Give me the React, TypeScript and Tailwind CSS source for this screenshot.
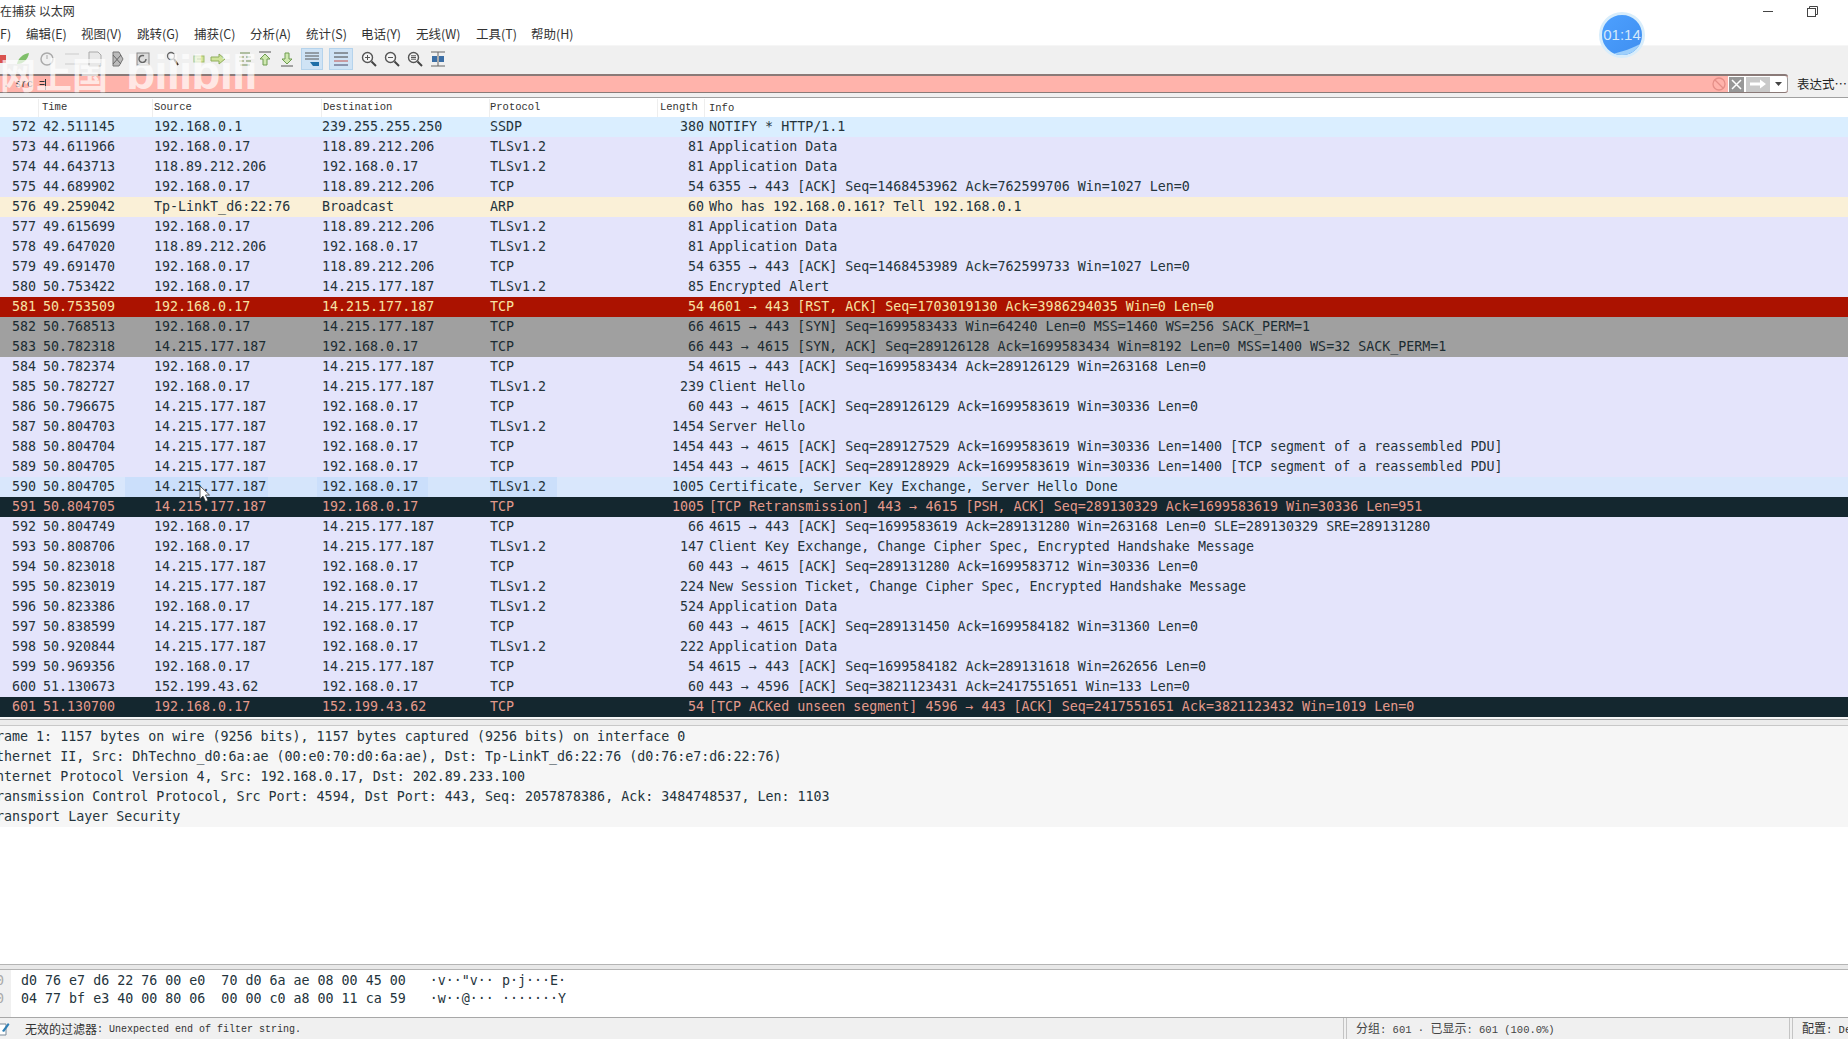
import React from "react";

const mono = "font-['DejaVu_Sans_Mono','Liberation_Mono',monospace]";
const cjk = "font-['Noto_Sans_CJK_SC','Liberation_Sans',sans-serif]";
const bitmap = "font-['Liberation_Mono','Noto_Sans_CJK_SC',monospace]";

type Kind = "udp" | "tcp" | "arp" | "rst" | "syn" | "bad" | "hl";
const styles: Record<Kind, string> = {
  udp: "bg-[#daeeff] text-[#24343c]",
  tcp: "bg-[#e4e4fb] text-[#24343c]",
  arp: "bg-[#faf0d7] text-[#24343c]",
  rst: "bg-[#ab1200] text-[#f8e2a4]",
  syn: "bg-[#a0a0a0] text-[#1c2c32]",
  bad: "bg-[#14272f] text-[#e39a8c]",
  hl: "bg-[linear-gradient(90deg,#d9e7fc_125px,#cbdffb_125px,#cbdffb_268px,#d5e5fb_268px,#d5e5fb_317px,#cbdffb_317px,#cbdffb_428px,#d5e5fb_428px,#d5e5fb_490px,#cbdffb_490px,#cbdffb_557px,#d9e7fc_557px)] text-[#24343c]",
};

const rows: [string, string, string, string, string, string, string, Kind][] = [
  ["572", "42.511145", "192.168.0.1", "239.255.255.250", "SSDP", "380", "NOTIFY * HTTP/1.1", "udp"],
  ["573", "44.611966", "192.168.0.17", "118.89.212.206", "TLSv1.2", "81", "Application Data", "tcp"],
  ["574", "44.643713", "118.89.212.206", "192.168.0.17", "TLSv1.2", "81", "Application Data", "tcp"],
  ["575", "44.689902", "192.168.0.17", "118.89.212.206", "TCP", "54", "6355 → 443 [ACK] Seq=1468453962 Ack=762599706 Win=1027 Len=0", "tcp"],
  ["576", "49.259042", "Tp-LinkT_d6:22:76", "Broadcast", "ARP", "60", "Who has 192.168.0.161? Tell 192.168.0.1", "arp"],
  ["577", "49.615699", "192.168.0.17", "118.89.212.206", "TLSv1.2", "81", "Application Data", "tcp"],
  ["578", "49.647020", "118.89.212.206", "192.168.0.17", "TLSv1.2", "81", "Application Data", "tcp"],
  ["579", "49.691470", "192.168.0.17", "118.89.212.206", "TCP", "54", "6355 → 443 [ACK] Seq=1468453989 Ack=762599733 Win=1027 Len=0", "tcp"],
  ["580", "50.753422", "192.168.0.17", "14.215.177.187", "TLSv1.2", "85", "Encrypted Alert", "tcp"],
  ["581", "50.753509", "192.168.0.17", "14.215.177.187", "TCP", "54", "4601 → 443 [RST, ACK] Seq=1703019130 Ack=3986294035 Win=0 Len=0", "rst"],
  ["582", "50.768513", "192.168.0.17", "14.215.177.187", "TCP", "66", "4615 → 443 [SYN] Seq=1699583433 Win=64240 Len=0 MSS=1460 WS=256 SACK_PERM=1", "syn"],
  ["583", "50.782318", "14.215.177.187", "192.168.0.17", "TCP", "66", "443 → 4615 [SYN, ACK] Seq=289126128 Ack=1699583434 Win=8192 Len=0 MSS=1400 WS=32 SACK_PERM=1", "syn"],
  ["584", "50.782374", "192.168.0.17", "14.215.177.187", "TCP", "54", "4615 → 443 [ACK] Seq=1699583434 Ack=289126129 Win=263168 Len=0", "tcp"],
  ["585", "50.782727", "192.168.0.17", "14.215.177.187", "TLSv1.2", "239", "Client Hello", "tcp"],
  ["586", "50.796675", "14.215.177.187", "192.168.0.17", "TCP", "60", "443 → 4615 [ACK] Seq=289126129 Ack=1699583619 Win=30336 Len=0", "tcp"],
  ["587", "50.804703", "14.215.177.187", "192.168.0.17", "TLSv1.2", "1454", "Server Hello", "tcp"],
  ["588", "50.804704", "14.215.177.187", "192.168.0.17", "TCP", "1454", "443 → 4615 [ACK] Seq=289127529 Ack=1699583619 Win=30336 Len=1400 [TCP segment of a reassembled PDU]", "tcp"],
  ["589", "50.804705", "14.215.177.187", "192.168.0.17", "TCP", "1454", "443 → 4615 [ACK] Seq=289128929 Ack=1699583619 Win=30336 Len=1400 [TCP segment of a reassembled PDU]", "tcp"],
  ["590", "50.804705", "14.215.177.187", "192.168.0.17", "TLSv1.2", "1005", "Certificate, Server Key Exchange, Server Hello Done", "hl"],
  ["591", "50.804705", "14.215.177.187", "192.168.0.17", "TCP", "1005", "[TCP Retransmission] 443 → 4615 [PSH, ACK] Seq=289130329 Ack=1699583619 Win=30336 Len=951", "bad"],
  ["592", "50.804749", "192.168.0.17", "14.215.177.187", "TCP", "66", "4615 → 443 [ACK] Seq=1699583619 Ack=289131280 Win=263168 Len=0 SLE=289130329 SRE=289131280", "tcp"],
  ["593", "50.808706", "192.168.0.17", "14.215.177.187", "TLSv1.2", "147", "Client Key Exchange, Change Cipher Spec, Encrypted Handshake Message", "tcp"],
  ["594", "50.823018", "14.215.177.187", "192.168.0.17", "TCP", "60", "443 → 4615 [ACK] Seq=289131280 Ack=1699583712 Win=30336 Len=0", "tcp"],
  ["595", "50.823019", "14.215.177.187", "192.168.0.17", "TLSv1.2", "224", "New Session Ticket, Change Cipher Spec, Encrypted Handshake Message", "tcp"],
  ["596", "50.823386", "192.168.0.17", "14.215.177.187", "TLSv1.2", "524", "Application Data", "tcp"],
  ["597", "50.838599", "14.215.177.187", "192.168.0.17", "TCP", "60", "443 → 4615 [ACK] Seq=289131450 Ack=1699584182 Win=31360 Len=0", "tcp"],
  ["598", "50.920844", "14.215.177.187", "192.168.0.17", "TLSv1.2", "222", "Application Data", "tcp"],
  ["599", "50.969356", "192.168.0.17", "14.215.177.187", "TCP", "54", "4615 → 443 [ACK] Seq=1699584182 Ack=289131618 Win=262656 Len=0", "tcp"],
  ["600", "51.130673", "152.199.43.62", "192.168.0.17", "TCP", "60", "443 → 4596 [ACK] Seq=3821123431 Ack=2417551651 Win=133 Len=0", "tcp"],
  ["601", "51.130700", "192.168.0.17", "152.199.43.62", "TCP", "54", "[TCP ACKed unseen segment] 4596 → 443 [ACK] Seq=2417551651 Ack=3821123432 Win=1019 Len=0", "bad"],
];

const menus: [string, string][] = [
  ["F)", "w-[26px]"], ["编辑(E)", "w-[55px]"], ["视图(V)", "w-[56px]"], ["跳转(G)", "w-[57px]"], ["捕获(C)", "w-[56px]"],
  ["分析(A)", "w-[56px]"], ["统计(S)", "w-[55px]"], ["电话(Y)", "w-[55px]"], ["无线(W)", "w-[60px]"], ["工具(T)", "w-[55px]"], ["帮助(H)", "w-[60px]"],
];

const details = [
  "Frame 1: 1157 bytes on wire (9256 bits), 1157 bytes captured (9256 bits) on interface 0",
  "Ethernet II, Src: DhTechno_d0:6a:ae (00:e0:70:d0:6a:ae), Dst: Tp-LinkT_d6:22:76 (d0:76:e7:d6:22:76)",
  "Internet Protocol Version 4, Src: 192.168.0.17, Dst: 202.89.233.100",
  "Transmission Control Protocol, Src Port: 4594, Dst Port: 443, Seq: 2057878386, Ack: 3484748537, Len: 1103",
  "Transport Layer Security",
];

const Ic = ({ ml, children }: { ml: string; children: React.ReactNode }) => (
  <svg width="18" height="18" viewBox="0 0 18 18" fill="none" className={`${ml} shrink-0`}>{children}</svg>
);
const Mag = ({ sign }: { sign: "+" | "-" | "=" }) => (
  <>
    <circle cx="7.5" cy="7.5" r="5" stroke="#555" strokeWidth="1.4" fill="#f6f6f6" />
    <path d="M11.5 11.5 L16 16" stroke="#444" strokeWidth="2" />
    <path d="M5 7.5 H10" stroke="#555" />
    {sign === "+" && <path d="M7.5 5 V10" stroke="#555" />}
    {sign === "=" && <path d="M5 5.8 H10 M5 9.2 H10" stroke="#555" />}
  </>
);

export default function App() {
  return (
    <div className={`relative w-[1848px] h-[1039px] overflow-hidden bg-white flex flex-col ${cjk}`}>
      {/* Title */}
      <div className="h-[22px] shrink-0 flex items-center justify-between text-[12px] text-[#333]">
        <span>在捕获 以太网</span>
        <div className="flex items-center pr-[30px] gap-[34px]">
          <div className="w-[10px] h-[1px] bg-[#444]" />
          <svg width="11" height="11" viewBox="0 0 11 11" fill="none" stroke="#444">
            <rect x="0.5" y="2.5" width="8" height="8" fill="#fff" />
            <path d="M2.5 2.5 V0.5 H10.5 V8.5 H8.5" />
          </svg>
        </div>
      </div>
      {/* Menu */}
      <div className="h-[23px] shrink-0 flex items-center text-[12.5px] text-[#333] pt-[1px]">
        {menus.map(([m, w]) => (
          <span key={m} className={`${w} shrink-0 whitespace-nowrap`}>{m}</span>
        ))}
      </div>
      {/* Toolbar */}
      <div className="h-[29px] shrink-0 bg-[#f0f0f0] border-t border-[#f6f6f6] flex items-center pb-[2px]">
        <svg width="10" height="18" viewBox="0 0 10 18" className="shrink-0"><rect x="0" y="5" width="6" height="8" fill="#d9534f" /></svg>
        <Ic ml="ml-[4px]"><path d="M3 14 C4 8 9 4 15 3 C14 9 10 14 3 14Z" fill="#7fbf6a" /></Ic>
        <Ic ml="ml-[6px]"><circle cx="9" cy="9" r="6" stroke="#aaa" strokeWidth="1.5" /><path d="M9 5 V9" stroke="#aaa" /></Ic>
        <Ic ml="ml-[7px]"><path d="M2 4 H16 M2 14 H16" stroke="#ccc" /></Ic>
        <Ic ml="ml-[5px]"><path d="M3 2 H12 L15 5 V16 H3Z" fill="#e8e8e8" stroke="#aaa" /></Ic>
        <Ic ml="ml-[5px]"><path d="M4 2 H10 L14 9 L10 16 H4Z" fill="#bbb" stroke="#777" /><path d="M4 5 L12 14 M12 5 L4 14" stroke="#666" /></Ic>
        <Ic ml="ml-[7px]"><rect x="3" y="3" width="12" height="12" fill="#ddd" stroke="#888" /><path d="M12 9 A3.5 3.5 0 1 1 10 5.8" stroke="#666" strokeWidth="1.5" /></Ic>
        <Ic ml="ml-[12px]"><circle cx="7" cy="6" r="3.5" stroke="#666" strokeWidth="1.3" /><path d="M10 9 L14 15" stroke="#333" strokeWidth="2" /></Ic>
        <Ic ml="ml-[8px]"><rect x="4" y="6" width="10" height="6" fill="#cfe39a" stroke="#9dbb6a" /><path d="M7 9 H11" stroke="#6d8f42" /></Ic>
        <Ic ml="ml-[1px]"><path d="M2 7 H10 V4 L16 9 L10 14 V11 H2Z" fill="#cfe39a" stroke="#8fae5c" /></Ic>
        <Ic ml="ml-[9px]"><path d="M4 3 H14 M4 15 H14 M3 7 H8 M3 11 H8 M10 7 H15 M10 11 H15" stroke="#6e8c52" /></Ic>
        <Ic ml="ml-[2px]"><path d="M3 2 H15" stroke="#555" /><path d="M9 4 L14 9 H11 V15 H7 V9 H4Z" fill="#cfe8b0" stroke="#6e9c50" /></Ic>
        <Ic ml="ml-[4px]"><path d="M3 16 H15" stroke="#555" /><path d="M9 14 L14 9 H11 V3 H7 V9 H4Z" fill="#cfe8b0" stroke="#6e9c50" /></Ic>
        <div className="ml-[5px] w-[22px] h-[22px] shrink-0 bg-[#cfe3f5] border border-[#b5d3ec] flex items-center justify-center">
          <svg width="18" height="16" viewBox="0 0 18 16" fill="none">
            <path d="M2 2 H16 M2 5 H16 M2 8 H16" stroke="#555" />
            <path d="M7 11 H16 V15 H10Z" fill="#1f6fa8" />
          </svg>
        </div>
        <div className="ml-[6px] w-[24px] h-[22px] shrink-0 bg-[#cfe3f5] border border-[#b5d3ec] flex items-center justify-center">
          <svg width="18" height="16" viewBox="0 0 18 16" fill="none">
            <path d="M2 2 H16 M2 6 H16" stroke="#444" />
            <path d="M2 10 H16" stroke="#c0504d" />
            <path d="M2 14 H16" stroke="#446" />
          </svg>
        </div>
        <Ic ml="ml-[7px]"><Mag sign="+" /></Ic>
        <Ic ml="ml-[5px]"><Mag sign="-" /></Ic>
        <Ic ml="ml-[5px]"><Mag sign="=" /></Ic>
        <Ic ml="ml-[5px]">
          <path d="M2 2 H16 M2 16 H16 M9 2 V16" stroke="#666" />
          <rect x="3" y="6" width="5" height="6" fill="#3b6ea5" />
          <rect x="10" y="6" width="5" height="6" fill="#3b6ea5" />
        </Ic>
      </div>
      {/* Filter */}
      <div className="h-[23px] shrink-0 bg-[#f0f0f0] flex items-start pr-[6px]">
        <div className="flex-1 h-[19px] bg-[#ffb3ab] border-t-2 border-b border-[#8a7a78] flex items-center rounded-r-[3px]">
          <span className={`${bitmap} text-[10px] text-[#333] pl-[3px] whitespace-pre`}>. src =</span>
          <span className="w-[1px] h-[11px] bg-[#333]" />
          <div className="flex-1" />
          <svg width="16" height="16" viewBox="0 0 16 16" fill="none" className="mr-[1px]">
            <circle cx="8" cy="8" r="6" stroke="#e58f88" strokeWidth="1.3" />
            <path d="M4 4 L12 12" stroke="#e58f88" strokeWidth="1.3" />
          </svg>
          <div className="w-[60px] h-full bg-white flex items-center border-r border-[#999] rounded-r-[3px]">
            <div className="w-[15px] h-[15px] ml-[1px] bg-[#979797] flex items-center justify-center">
              <svg width="11" height="11" viewBox="0 0 11 11"><path d="M1 1 L10 10 M10 1 L1 10" stroke="#fff" strokeWidth="1.5" /></svg>
            </div>
            <div className="w-[24px] h-[15px] ml-[2px] bg-[#c9c9c9] flex items-center justify-center">
              <svg width="18" height="10" viewBox="0 0 18 10"><path d="M1 3.5 H11 V0.5 L17 5 L11 9.5 V6.5 H1Z" fill="#fff" /></svg>
            </div>
            <div className="flex-1 flex justify-center">
              <svg width="7" height="4" viewBox="0 0 7 4"><path d="M0 0 H7 L3.5 4Z" fill="#444" /></svg>
            </div>
          </div>
        </div>
        <span className="w-[54px] pl-[9px] text-[12.5px] leading-[19px] text-[#222] whitespace-nowrap">表达式…</span>
      </div>
      <div className="h-[1px] shrink-0 bg-[#a0a0a0] mb-[1px]" />
      {/* Header */}
      <div className={`h-[18px] shrink-0 flex items-center text-[10.5px] text-[#333] ${bitmap}`}>
        <div className="w-[39px] h-full border-r border-[#eee]" />
        <div className="w-[114px] h-full border-r border-[#eee] pl-[3px] leading-[17px]">Time</div>
        <div className="w-[169px] h-full border-r border-[#eee] pl-[1px] leading-[17px]">Source</div>
        <div className="w-[168px] h-full border-r border-[#eee] pl-[1px] leading-[17px]">Destination</div>
        <div className="w-[168px] h-full border-r border-[#eee] leading-[17px]">Protocol</div>
        <div className="w-[47px] h-full border-r border-[#eee] pl-[2px] leading-[17px]">Length</div>
        <div className="pl-[4px] leading-[17px]">Info</div>
      </div>
      {/* Packet list */}
      <div className={`shrink-0 text-[13.32px] ${mono}`}>
        {rows.map((r) => (
          <div key={r[0]} className={`h-[20px] flex items-center whitespace-pre ${styles[r[7]]}`}>
            <div className="w-[36px] text-right shrink-0">{r[0]}</div>
            <div className="w-[118px] pl-[7px] shrink-0">{r[1]}</div>
            <div className="w-[168px] shrink-0">{r[2]}</div>
            <div className="w-[168px] shrink-0">{r[3]}</div>
            <div className="w-[165px] shrink-0">{r[4]}</div>
            <div className="w-[49px] text-right shrink-0">{r[5]}</div>
            <div className="pl-[5px] flex-1">{r[6]}</div>
          </div>
        ))}
      </div>
      {/* Splitter */}
      <div className="h-[10px] shrink-0 bg-[#f6f6f6] flex flex-col pt-[2px]">
        <div className="h-[1px] bg-[#a8a8a8]" />
        <div className="h-[5px] bg-[#ececec]" />
        <div className="h-[1px] bg-[#c8c8c8]" />
      </div>
      {/* Details */}
      <div className={`shrink-0 bg-[#f6f6f6] text-[13.32px] text-[#24343c] ${mono}`}>
        {details.map((d) => (
          <div key={d} className="h-[20px] leading-[20px] -ml-[12px] whitespace-pre">{d}</div>
        ))}
      </div>
      <div className="flex-1 bg-white" />
      <div className="h-[6px] shrink-0 bg-[#e8e8e8] border-y border-[#b4b4b4]" />
      {/* Hex */}
      <div className={`h-[47px] shrink-0 flex text-[13.32px] leading-[18px] text-[#24343c] ${mono}`}>
        <div className="w-[11px] shrink-0 bg-[#f0f0f0] pt-[2px] text-[#aaa] overflow-hidden">
          <div className="-ml-[4px]">0</div>
          <div className="-ml-[4px]">0</div>
        </div>
        <div className="pl-[10px] pt-[2px] whitespace-pre">
          <div>{"d0 76 e7 d6 22 76 00 e0  70 d0 6a ae 08 00 45 00   ·v··\"v·· p·j···E·"}</div>
          <div>{"04 77 bf e3 40 00 80 06  00 00 c0 a8 00 11 ca 59   ·w··@··· ·······Y"}</div>
        </div>
      </div>
      {/* Status */}
      <div className="h-[22px] shrink-0 bg-[#f0f0f0] border-t border-[#a8a8a8] flex items-center">
        <svg width="12" height="14" viewBox="0 0 12 14" className="-ml-[2px] shrink-0">
          <path d="M0 2 H8 V13 H0Z" fill="#fff" stroke="#7a8a99" />
          <path d="M4 9 L10 1 L11.5 2.5 L6 10Z" fill="#2f7fb5" />
        </svg>
        <span className="ml-[15px] text-[12px] text-[#333] whitespace-pre">无效的过滤器</span>
        <span className={`${bitmap} text-[10px] text-[#333] whitespace-pre pt-[2px]`}>: Unexpected end of filter string.</span>
        <div className="flex-1" />
        <div className="w-[4px] h-full border-x border-[#c4c4c4]" />
        <div className={`w-[442px] pl-[9px] text-[10.5px] text-[#444] whitespace-pre ${bitmap}`}>
          <span className={`${cjk} text-[12px]`}>分组</span>: 601 · <span className={`${cjk} text-[12px]`}>已显示</span>: 601 (100.0%)
        </div>
        <div className="w-[4px] h-full border-x border-[#c4c4c4]" />
        <div className={`w-[55px] pl-[9px] text-[10.5px] text-[#333] whitespace-pre overflow-hidden ${bitmap}`}>
          <span className={`${cjk} text-[12px]`}>配置</span>: Default
        </div>
      </div>

      {/* Recording timer overlay */}
      <div className="absolute left-[1599px] top-[12px] w-[46px] h-[46px] rounded-full border-[3px] border-[#d8edfb] bg-gradient-to-br from-[#4da0ff] to-[#3f8ff0] overflow-hidden flex items-center justify-center text-[15px] font-['Liberation_Sans',sans-serif] text-[#d5e9fb]">
        01:14
        <svg className="absolute left-0 bottom-0" width="40" height="14" viewBox="0 0 40 14">
          <path d="M8 14 C16 11 26 10 40 2 V14Z" fill="#9fd0fb" />
        </svg>
      </div>
      {/* Video watermark overlay */}
      <div className={`absolute left-[0px] top-[49px] h-[48px] flex items-center text-white/70 font-bold pointer-events-none ${cjk}`}>
        <span className="text-[36px] leading-none">网上国</span>
        <span className="ml-[18px] text-[48px] font-['Liberation_Sans',sans-serif] leading-none tracking-[-1px]">bilibili</span>
      </div>
      {/* Mouse cursor */}
      <svg className="absolute left-[199px] top-[485px]" width="12" height="18" viewBox="0 0 12 18">
        <path d="M1 1 V14 L4 11 L6.5 16.5 L9 15.5 L6.5 10 H10.5Z" fill="#fff" stroke="#333" strokeWidth="0.8" />
      </svg>
    </div>
  );
}
